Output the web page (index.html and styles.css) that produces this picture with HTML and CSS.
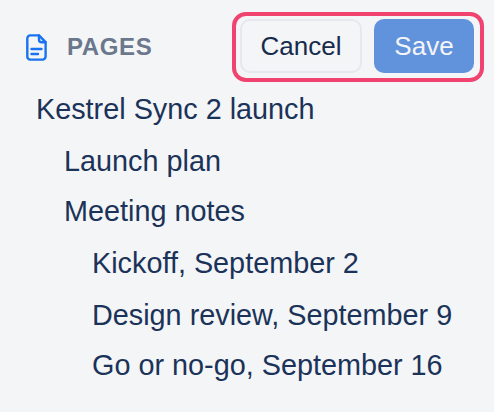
FILE: index.html
```html
<!DOCTYPE html>
<html lang="en">
<head>
    <meta charset="UTF-8">
    <meta name="viewport" content="width=device-width, initial-scale=1.0">
    <title>Pages</title>
    <link rel="stylesheet" href="styles.css">
</head>
<body>
    <div class="header">
        <div class="title">
            <svg class="title-icon" width="21" height="27" viewBox="0 0 21 27" fill="none" stroke="#1a73f0" stroke-width="2.400" stroke-linejoin="round" stroke-linecap="round">
                <path d="M4.300 1.400h8.700l6.600 6.800v14.300a3.100 3.100 0 0 1-3.100 3.100H4.300a3 3 0 0 1-3-3.100V4.500a3 3 0 0 1 3-3.100z"/>
                <path d="M13 1.400v4.100a2.700 2.700 0 0 0 2.700 2.700h3.900"/>
                <path d="M5.500 15h10M5.500 20h6.500"/>
            </svg>
            <span class="title-text">PAGES</span>
        </div>
        <div class="actions">
            <button class="btn btn-cancel">Cancel</button>
            <button class="btn btn-save">Save</button>
        </div>
    </div>
    <ul class="tree">
        <li class="level-0">Kestrel Sync 2 launch</li>
        <li class="level-1 short">Launch plan</li>
        <li class="level-1">Meeting notes</li>
        <li class="level-2">Kickoff, September 2</li>
        <li class="level-2 short">Design review, September 9</li>
        <li class="level-2">Go or no-go, September 16</li>
    </ul>
</body>
</html>
```

FILE: styles.css
```css
body {
    margin: 0;
    background: #f4f5f7;
    font-family: "Liberation Sans", Arial, sans-serif;
    color: #1b3358;
}
.header {
    display: flex;
    justify-content: space-between;
    align-items: center;
    padding: 12px 10px 0 26px;
}
.title {
    display: flex;
    align-items: center;
    gap: 20px;
}
.title-icon {
    display: block;
}
.title-text {
    font-size: 24px;
    font-weight: 700;
    letter-spacing: 0.6px;
    color: #6b778c;
}
.actions {
    display: flex;
    gap: 12px;
    padding: 3px 6px 5px 4px;
    border: 4px solid #f0436f;
    border-radius: 14px;
}
.btn {
    height: 54px;
    font-family: inherit;
    font-size: 26px;
    border-radius: 10px;
    padding: 0;
}
.btn-cancel {
    width: 122px;
    background: #f4f5f7;
    border: 2px solid #e6e8ed;
    color: #172b4d;
}
.btn-save {
    width: 100px;
    background: #6192dc;
    border: none;
    color: #f4f5f7;
}
.tree {
    list-style: none;
    margin: 1px 0 0;
    padding: 0;
    font-size: 28.800px;
}
.tree li {
    height: 52px;
    line-height: 52px;
}
.tree li.short {
    height: 50px;
}
.level-0 {
    padding-left: 36px;
}
.level-1 {
    padding-left: 64px;
}
.level-2 {
    padding-left: 92px;
}
```
